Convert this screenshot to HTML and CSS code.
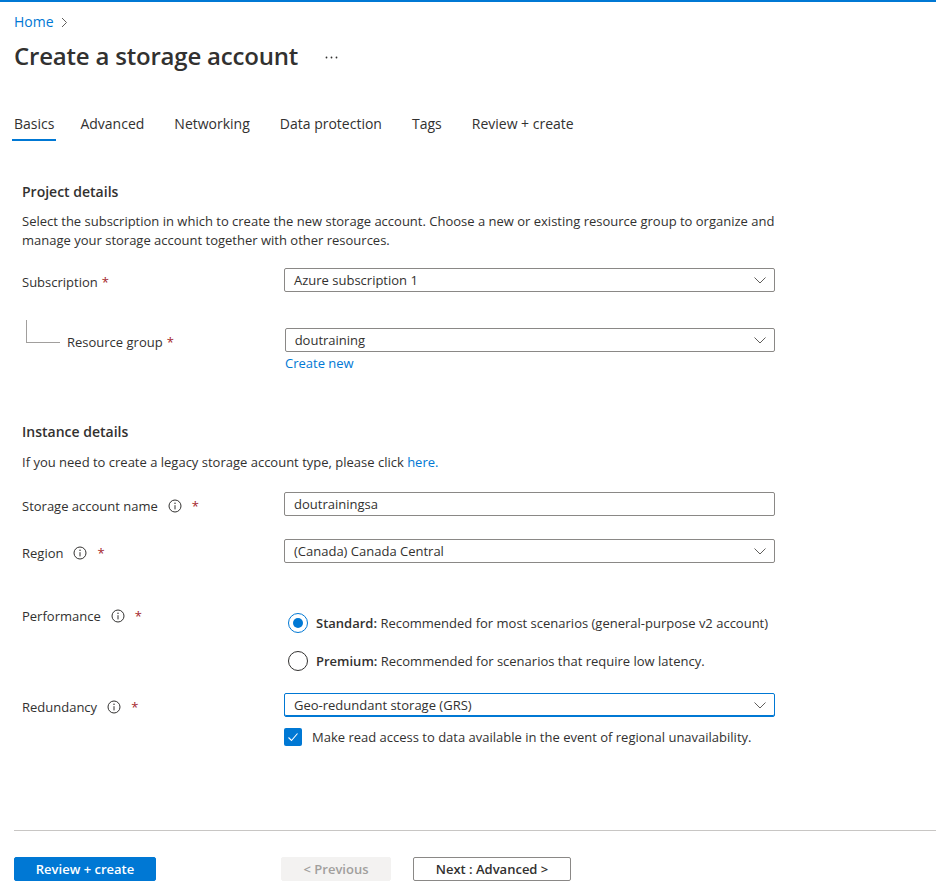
FILE: index.html
```html
<!DOCTYPE html>
<html lang="en">
<head>
<meta charset="utf-8">
<title>Create a storage account</title>
<link rel="stylesheet" href="styles.css">
</head>
<body>
<div class="topbar"></div>
<div class="page">
  <nav class="breadcrumb">
    <a class="crumb" href="#">Home</a>
    <svg class="crumb-chevron" width="7" height="11" viewBox="0 0 7 11"><path d="M1 1 L5.5 5.5 L1 10" fill="none" stroke="#605e5c" stroke-width="1"/></svg>
  </nav>
  <div class="title-row">
    <h1 class="title">Create a storage account</h1>
    <svg class="more" width="13" height="3" viewBox="0 0 13 3"><circle cx="1.5" cy="1.5" r="0.9" fill="#323130"/><circle cx="6.5" cy="1.5" r="0.9" fill="#323130"/><circle cx="11.5" cy="1.5" r="0.9" fill="#323130"/></svg>
  </div>
  <div class="tabs">
    <span class="tab active">Basics</span>
    <span class="tab">Advanced</span>
    <span class="tab">Networking</span>
    <span class="tab">Data protection</span>
    <span class="tab">Tags</span>
    <span class="tab">Review + create</span>
  </div>

  <div class="content">
    <h2 class="section-title">Project details</h2>
    <p class="section-desc">Select the subscription in which to create the new storage account. Choose a new or existing resource group to organize and manage your storage account together with other resources.</p>

    <div class="row row-sub">
      <div class="label">Subscription<span class="req">*</span></div>
      <div class="control">
        <div class="select"><span>Azure subscription 1</span><svg class="chev" width="12" height="7" viewBox="0 0 12 7"><path d="M0.5 0.5 L6 6 L11.5 0.5" fill="none" stroke="#605e5c" stroke-width="1"/></svg></div>
      </div>
    </div>

    <div class="row row-rg">
      <div class="label label-rg"><span class="tree"></span><span class="rg-text">Resource group<span class="req">*</span></span></div>
      <div class="control control-rg">
        <div class="select"><span>doutraining</span><svg class="chev" width="12" height="7" viewBox="0 0 12 7"><path d="M0.5 0.5 L6 6 L11.5 0.5" fill="none" stroke="#605e5c" stroke-width="1"/></svg></div>
      </div>
    </div>
    <div class="create-new"><a href="#">Create new</a></div>

    <h2 class="section-title section-instance">Instance details</h2>
    <p class="section-desc desc-instance">If you need to create a legacy storage account type, please click <a href="#">here.</a></p>

    <div class="row row-name">
      <div class="label">Storage account name<svg class="info" width="14" height="14" viewBox="0 0 14 14"><circle cx="7" cy="7" r="6" fill="none" stroke="#323130" stroke-width="1"/><path d="M7 6.2 V10.4" stroke="#323130" stroke-width="1"/><circle cx="7" cy="4.2" r="0.75" fill="#323130"/></svg><span class="req req-info">*</span></div>
      <div class="control">
        <div class="input">doutrainingsa</div>
      </div>
    </div>

    <div class="row row-region">
      <div class="label">Region<svg class="info" width="14" height="14" viewBox="0 0 14 14"><circle cx="7" cy="7" r="6" fill="none" stroke="#323130" stroke-width="1"/><path d="M7 6.2 V10.4" stroke="#323130" stroke-width="1"/><circle cx="7" cy="4.2" r="0.75" fill="#323130"/></svg><span class="req req-info">*</span></div>
      <div class="control">
        <div class="select"><span>(Canada) Canada Central</span><svg class="chev" width="12" height="7" viewBox="0 0 12 7"><path d="M0.5 0.5 L6 6 L11.5 0.5" fill="none" stroke="#605e5c" stroke-width="1"/></svg></div>
      </div>
    </div>

    <div class="row row-perf">
      <div class="label">Performance<svg class="info" width="14" height="14" viewBox="0 0 14 14"><circle cx="7" cy="7" r="6" fill="none" stroke="#323130" stroke-width="1"/><path d="M7 6.2 V10.4" stroke="#323130" stroke-width="1"/><circle cx="7" cy="4.2" r="0.75" fill="#323130"/></svg><span class="req req-info">*</span></div>
      <div class="control control-radios">
        <div class="radio-option">
          <span class="radio checked"><span class="radio-dot"></span></span>
          <span class="radio-text"><b>Standard:</b> Recommended for most scenarios (general-purpose v2 account)</span>
        </div>
        <div class="radio-option radio-second">
          <span class="radio"></span>
          <span class="radio-text"><b>Premium:</b> Recommended for scenarios that require low latency.</span>
        </div>
      </div>
    </div>

    <div class="row row-red">
      <div class="label">Redundancy<svg class="info" width="14" height="14" viewBox="0 0 14 14"><circle cx="7" cy="7" r="6" fill="none" stroke="#323130" stroke-width="1"/><path d="M7 6.2 V10.4" stroke="#323130" stroke-width="1"/><circle cx="7" cy="4.2" r="0.75" fill="#323130"/></svg><span class="req req-info">*</span></div>
      <div class="control">
        <div class="select focused"><span>Geo-redundant storage (GRS)</span><svg class="chev" width="12" height="7" viewBox="0 0 12 7"><path d="M0.5 0.5 L6 6 L11.5 0.5" fill="none" stroke="#605e5c" stroke-width="1"/></svg></div>
      </div>
    </div>

    <div class="check-row">
      <span class="checkbox"><svg width="18" height="18" viewBox="0 0 18 18"><path d="M4.5 9.5 L7.5 12.5 L13.5 5.5" fill="none" stroke="#ffffff" stroke-width="1.1"/></svg></span>
      <span class="check-text">Make read access to data available in the event of regional unavailability.</span>
    </div>
  </div>

  <div class="divider"></div>

  <div class="footer">
    <button class="btn btn-primary">Review + create</button>
    <button class="btn btn-disabled">&lt; Previous</button>
    <button class="btn btn-default">Next : Advanced &gt;</button>
  </div>
</div>
</body>
</html>
```

FILE: styles.css
```css
* { box-sizing: border-box; }

body {
  margin: 0;
  font-family: "Open Sans", "Noto Sans", sans-serif;
  color: #323130;
  background: #ffffff;
}

a { color: #0078d4; text-decoration: none; }

.topbar {
  height: 2px;
  background: #0078d4;
}

.page {
  padding-left: 14px;
}

.breadcrumb {
  margin-top: 10px;
  height: 20px;
  display: flex;
  align-items: center;
  gap: 7px;
  font-size: 14px;
  line-height: 20px;
}

.crumb-chevron { display: block; }

.title-row {
  margin-top: 8px;
  height: 32px;
  display: flex;
  align-items: center;
}

.title {
  margin: 0;
  font-size: 24px;
  font-weight: 600;
  line-height: 32px;
  letter-spacing: -0.2px;
}

.more {
  display: block;
  margin-left: 27px;
  margin-top: 2px;
}

.tabs {
  margin-top: 42px;
  display: flex;
  gap: 26px;
}

.tab {
  font-size: 14px;
  line-height: 20px;
  padding: 0 2px 5px;
  border-bottom: 2px solid transparent;
}

.tab:first-child {
  margin-left: -2px;
  margin-right: -4px;
}

.tab.active { border-bottom-color: #0078d4; }

.content {
  padding-left: 8px;
  width: 761px;
}

.section-title {
  margin: 41px 0 0;
  font-size: 14px;
  font-weight: 600;
  line-height: 20px;
}

.section-desc {
  margin: 10px 0 0;
  font-size: 13px;
  line-height: 19px;
}

.row {
  display: flex;
  align-items: center;
}

.label {
  width: 262px;
  font-size: 13px;
  line-height: 20px;
  padding-top: 4px;
  display: flex;
  align-items: center;
}

.control { width: 491px; }

.req {
  color: #a4262c;
  margin-left: 4px;
}

.req-info { margin-left: 10px; }

.info {
  display: block;
  margin-left: 10px;
}

.select,
.input {
  height: 24px;
  border: 1px solid #8a8886;
  border-radius: 2px;
  display: flex;
  align-items: center;
  justify-content: space-between;
  padding: 0 8px 0 9px;
  font-size: 13px;
}

.chev { display: block; }

.select.focused {
  border-color: #0078d4;
  box-shadow: inset 0 -1px 0 #0078d4;
}

.row-sub { margin-top: 18px; }

.row-rg { margin-top: 36px; }

.label-rg {
  height: 24px;
  align-items: flex-end;
}

.tree {
  width: 34px;
  height: 23px;
  margin-left: 4px;
  margin-bottom: 9px;
  border-left: 1px solid #a19f9d;
  border-bottom: 1px solid #a19f9d;
  flex-shrink: 0;
}

.rg-text {
  margin-left: 7px;
  align-self: center;
}

.control-rg { margin-left: 1px; }

.create-new {
  margin: 2px 0 0 263px;
  font-size: 13px;
  line-height: 18px;
}

.section-instance { margin-top: 50px; }

.desc-instance { margin-top: 11px; }

.row-name { margin-top: 20px; }

.row-region { margin-top: 23px; }

.row-perf {
  margin-top: 43px;
  align-items: flex-start;
}

.row-perf .label { padding-top: 0; }

.control-radios { padding-top: 7px; }

.radio-option {
  display: flex;
  align-items: center;
  gap: 8px;
  margin-left: 4px;
  font-size: 13px;
}

.radio-second { margin-top: 18px; }

.radio {
  width: 20px;
  height: 20px;
  border: 1px solid #323130;
  border-radius: 50%;
  display: flex;
  align-items: center;
  justify-content: center;
  flex-shrink: 0;
}

.radio.checked { border-color: #0078d4; }

.radio-dot {
  width: 10px;
  height: 10px;
  border-radius: 50%;
  background: #0078d4;
}

.radio-text b { font-weight: 600; }

.row-red { margin-top: 22px; }

.check-row {
  margin: 11px 0 0 262px;
  display: flex;
  align-items: center;
  gap: 10px;
  font-size: 13px;
}

.checkbox {
  width: 18px;
  height: 18px;
  background: #0078d4;
  border-radius: 2px;
  display: block;
  flex-shrink: 0;
}

.checkbox svg { display: block; }

.divider {
  margin-top: 84px;
  height: 1px;
  background: #c8c6c4;
}

.footer {
  margin-top: 26px;
  display: flex;
}

.btn {
  height: 24px;
  font-family: inherit;
  font-size: 13px;
  font-weight: 600;
  border-radius: 2px;
  display: flex;
  align-items: center;
  justify-content: center;
  padding: 0;
  border: 1px solid transparent;
}

.btn-primary {
  width: 142px;
  background: #0078d4;
  color: #ffffff;
  border-color: #0078d4;
}

.btn-disabled {
  width: 110px;
  margin-left: 125px;
  background: #f3f2f1;
  border-color: #f3f2f1;
  color: #a19f9d;
}

.btn-default {
  width: 158px;
  margin-left: 22px;
  background: #ffffff;
  border-color: #8a8886;
  color: #323130;
}
```
